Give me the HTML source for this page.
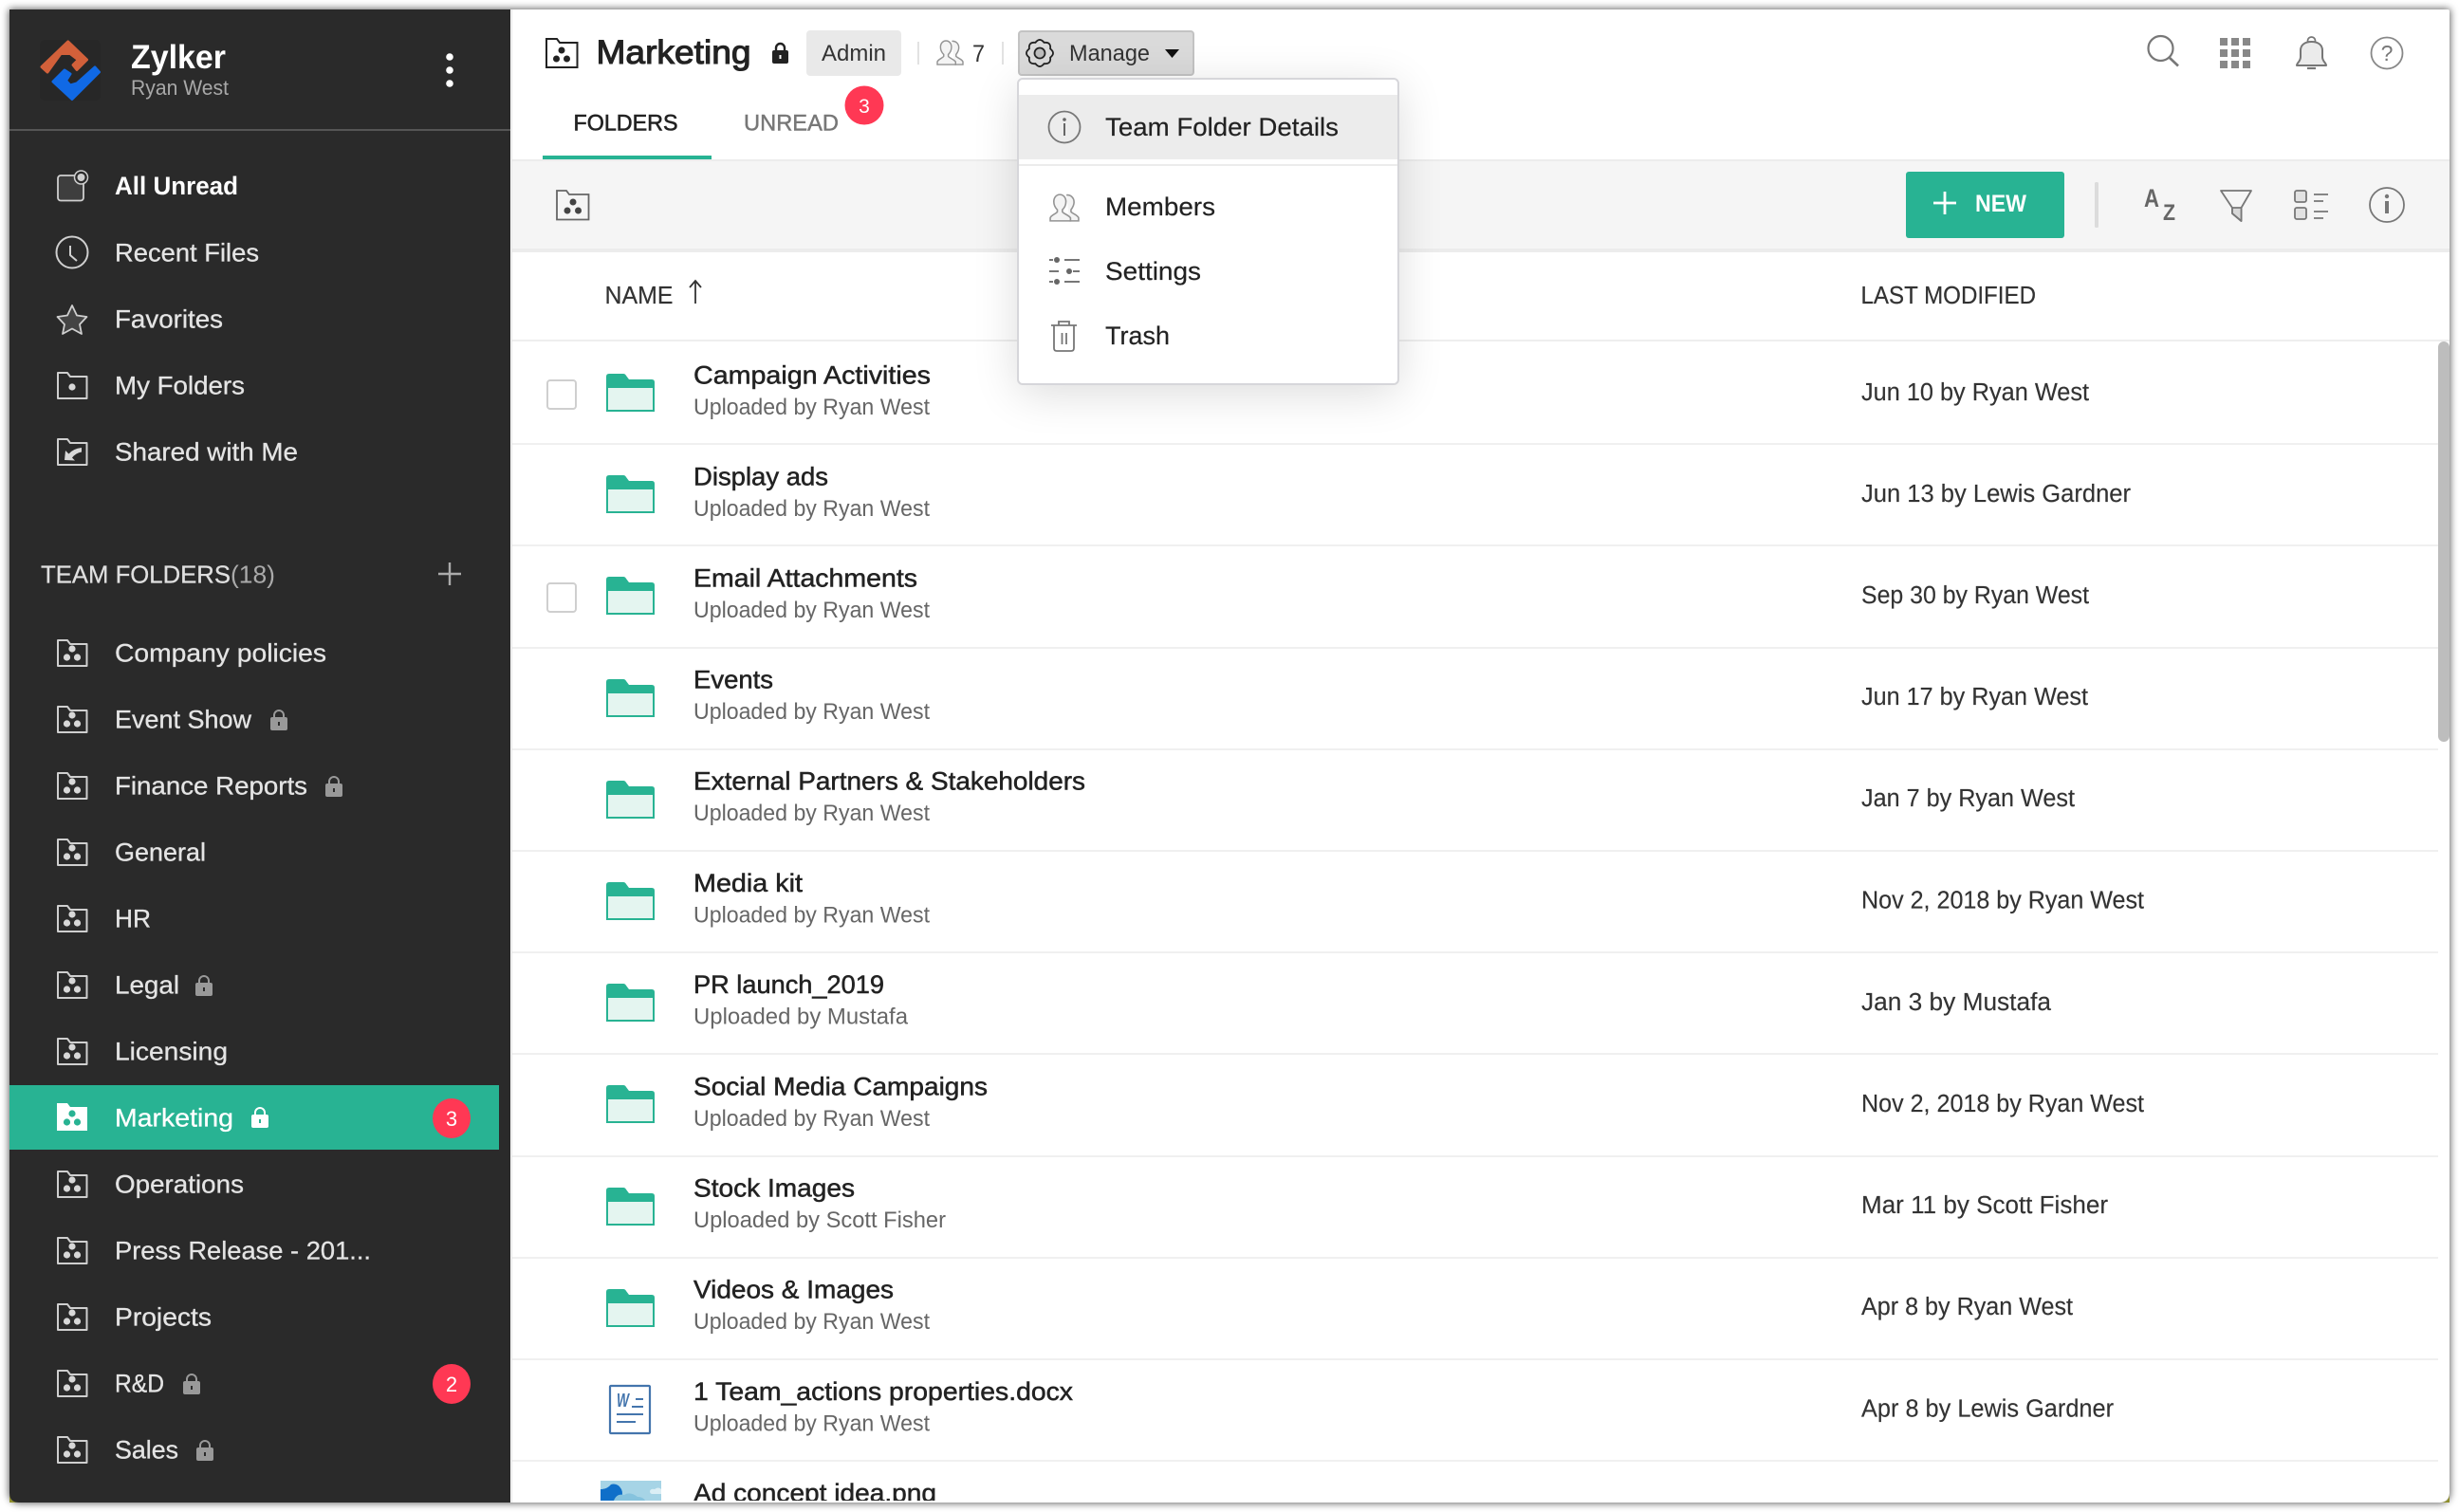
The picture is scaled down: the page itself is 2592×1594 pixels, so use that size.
<!DOCTYPE html>
<html><head><meta charset="utf-8"><title>Marketing</title>
<style>
html,body{margin:0;padding:0;background:#fff;width:2592px;height:1594px;overflow:hidden}
#win{position:absolute;left:10px;top:10px;width:2572px;height:1574px;background:#fff;box-shadow:0 0 8px 1px rgba(0,0,0,.6);border-radius:2px 2px 10px 10px}
svg{position:absolute;left:0;top:0}
text{font-family:"Liberation Sans",sans-serif;}
.m{font-size:26.5px;fill:#e4e4e4;stroke:#e4e4e4;stroke-width:.3}
.t{font-size:26.5px;fill:#222;stroke:#222;stroke-width:.5}
.s{font-size:24px;fill:#666}
.d{font-size:25.5px;fill:#333;stroke:#333;stroke-width:.15}
.dd{font-size:27px;fill:#222;stroke:#222;stroke-width:.2}
.ic{fill:none;stroke:#cfcfcf;stroke-width:2;stroke-linejoin:round}
</style></head><body>
<div id="win"></div>
<svg width="2592" height="1594" viewBox="0 0 2592 1594" xmlns="http://www.w3.org/2000/svg">
<defs>
<clipPath id="cl"><rect x="540" y="360" width="2030" height="1222"/></clipPath>
<filter id="sh" x="-30%" y="-30%" width="160%" height="170%"><feGaussianBlur stdDeviation="24"/></filter>
<symbol id="tf" width="34" height="31" viewBox="-1 -1 34 31" overflow="visible">
<path class="ic" d="M1 1H11L14 5H31.5V28H1Z"/><circle cx="16" cy="10" r="3.6" fill="#d8d8d8"/><circle cx="10.5" cy="19" r="3.6" fill="#d8d8d8"/><circle cx="21.5" cy="19" r="3.6" fill="#d8d8d8"/>
</symbol>
<symbol id="lk" width="18" height="22" viewBox="0 0 18 22" overflow="visible">
<path d="M4 9V6a5 5 0 0 1 10 0V9" fill="none" stroke="currentColor" stroke-width="2"/><rect y="8" width="18" height="14" rx="2" fill="currentColor"/><rect x="8" y="13" width="2" height="4" fill="#2a2a2a"/>
</symbol>
<symbol id="fo" width="51" height="40" viewBox="0 0 51 40">
<path d="M1 14H50V39H1Z" fill="#e4f5f0" stroke="#28b393" stroke-width="2"/>
<path d="M0 13V3Q0 0 3 0H18Q20 0 21 2L24 6H48Q51 6 51 9V13Z" fill="#28b393"/>
</symbol>
<symbol id="mem" viewBox="0 0 30 28" overflow="visible">
<path d="M17 1.500C21 1 24.500 4 24.500 8.500C24.500 11.500 23 14 21.500 16V18C23 20 28 21 29 24V27H20" fill="#f4f4f4" stroke="#949494" stroke-width="1.500"/>
<path d="M1 27V24C2 21 7 20 8 18V16C6 14 4.500 11 4.500 8C4.500 4 7 1 10.500 1S16.500 4 16.500 8C16.500 11 15 14 13 16V18C14 20 19 21 21 24V27Z" fill="#f4f4f4" stroke="#949494" stroke-width="1.500"/>
</symbol>
</defs>

<!-- corner tints -->
<path d="M2572 1584h10v-10q0 10-10 10z" fill="#8f8f2c"/>
<path d="M10 1574v10h10q-10 0-10-10z" fill="#8f8f2c"/>

<!-- sidebar -->
<path d="M10 10H538V1584H20Q10 1584 10 1574Z" fill="#2a2a2a"/>
<rect x="10" y="136" width="528" height="2" fill="#555"/>
<rect x="42" y="42" width="64" height="64" rx="5" fill="#272727"/>
<path d="M71.700 44L91.500 63L81 73.500L77 68.500L82.500 63L74 56.500H64L50 76L44 70.500Z" fill="#d2603a" stroke="#d2603a" stroke-width="3" stroke-linejoin="round"/>
<path d="M100 71L104.500 76L76 104.500L56 86L68 74L74 78L69.500 85L74 90L81 88Z" fill="#1069e5" stroke="#1069e5" stroke-width="3" stroke-linejoin="round"/>
<text x="138" y="72" font-size="35" font-weight="700" fill="#fff" textLength="100" lengthAdjust="spacingAndGlyphs">Zylker</text>
<text x="138" y="100" font-size="22" fill="#a8a8a8" textLength="103" lengthAdjust="spacingAndGlyphs">Ryan West</text>
<circle cx="474" cy="60" r="3.800" fill="#fff"/><circle cx="474" cy="74" r="3.800" fill="#fff"/><circle cx="474" cy="88" r="3.800" fill="#fff"/>

<rect x="61" y="185" width="27" height="26.500" rx="3" fill="#3e3e3e" stroke="#cfcfcf" stroke-width="1.800"/>
<circle cx="85.500" cy="187" r="7" fill="#2a2a2a" stroke="#cfcfcf" stroke-width="1.500"/><circle cx="85.500" cy="187" r="4" fill="#cfcfcf"/>
<text x="121" y="205" font-size="26.500" font-weight="700" fill="#fff" textLength="130" lengthAdjust="spacingAndGlyphs">All Unread</text>

<circle cx="76" cy="266" r="16.500" class="ic"/><path class="ic" d="M74 259V269L81 275"/>
<text class="m" x="121" y="275.500" textLength="152" lengthAdjust="spacingAndGlyphs">Recent Files</text>

<path d="M76 322L81 332.500L91.500 334L84 342L86 352L76 346.500L66 352L68 342L60.500 334L71 332.500Z" fill="#444" stroke="#cfcfcf" stroke-width="1.800" stroke-linejoin="round"/>
<text class="m" x="121" y="345.500" textLength="114" lengthAdjust="spacingAndGlyphs">Favorites</text>

<path class="ic" d="M61 393H71L74 397H91.500V420H61Z"/><circle cx="76" cy="408" r="3.600" fill="#d8d8d8"/>
<text class="m" x="121" y="415.500" textLength="137" lengthAdjust="spacingAndGlyphs">My Folders</text>

<path class="ic" d="M61 463H71L74 467H91.500V490H61Z"/><path d="M68 485L69 475L72.500 478.500Q77 473 86 472V476.500Q80 477.500 76 482.500L79 485.500Z" fill="#d8d8d8"/>
<text class="m" x="121" y="485.500" textLength="193" lengthAdjust="spacingAndGlyphs">Shared with Me</text>

<text x="43" y="614.500" font-size="26" fill="#e0e0e0" stroke="#e0e0e0" stroke-width=".25" textLength="200" lengthAdjust="spacingAndGlyphs">TEAM FOLDERS</text>
<text x="243" y="614.500" font-size="26" fill="#aaa" textLength="47" lengthAdjust="spacingAndGlyphs">(18)</text>
<path d="M474 593V617M462 605H486" stroke="#ababab" stroke-width="2.400"/>

<use href="#tf" x="59" y="673"/><text class="m" x="121" y="697.500" textLength="223" lengthAdjust="spacingAndGlyphs">Company policies</text>
<use href="#tf" x="59" y="743"/><text class="m" x="121" y="767.500" textLength="144" lengthAdjust="spacingAndGlyphs">Event Show</text><use href="#lk" x="285" y="748" color="#999"/>
<use href="#tf" x="59" y="813"/><text class="m" x="121" y="837.500" textLength="203" lengthAdjust="spacingAndGlyphs">Finance Reports</text><use href="#lk" x="343" y="818" color="#999"/>
<use href="#tf" x="59" y="883"/><text class="m" x="121" y="907.500" textLength="96" lengthAdjust="spacingAndGlyphs">General</text>
<use href="#tf" x="59" y="953"/><text class="m" x="121" y="977.500" textLength="38" lengthAdjust="spacingAndGlyphs">HR</text>
<use href="#tf" x="59" y="1023"/><text class="m" x="121" y="1047.500" textLength="68" lengthAdjust="spacingAndGlyphs">Legal</text><use href="#lk" x="206" y="1028" color="#999"/>
<use href="#tf" x="59" y="1093"/><text class="m" x="121" y="1117.500" textLength="119" lengthAdjust="spacingAndGlyphs">Licensing</text>

<rect x="10" y="1144" width="516" height="68" fill="#28b393"/>
<path d="M60 1163H71L74 1167H92V1192H60Z" fill="#fff"/><circle cx="76" cy="1174" r="3.600" fill="#28b393"/><circle cx="70.500" cy="1183" r="3.600" fill="#28b393"/><circle cx="81.500" cy="1183" r="3.600" fill="#28b393"/>
<text x="121" y="1187.500" font-size="26.500" fill="#fff" stroke="#fff" stroke-width=".3" textLength="125" lengthAdjust="spacingAndGlyphs">Marketing</text>
<path d="M269 1176V1173a5 5 0 0 1 10 0V1176" fill="none" stroke="#fff" stroke-width="2"/><rect x="265" y="1175" width="18" height="14" rx="2" fill="#fff"/><rect x="273" y="1180" width="2" height="4" fill="#28b393"/>
<ellipse cx="476" cy="1179" rx="20" ry="21" fill="#ff3854"/><text x="476" y="1187" font-size="22" fill="#fff" text-anchor="middle">3</text>

<use href="#tf" x="59" y="1233"/><text class="m" x="121" y="1257.500" textLength="136" lengthAdjust="spacingAndGlyphs">Operations</text>
<use href="#tf" x="59" y="1303"/><text class="m" x="121" y="1327.500" textLength="270" lengthAdjust="spacingAndGlyphs">Press Release - 201...</text>
<use href="#tf" x="59" y="1373"/><text class="m" x="121" y="1397.500" textLength="102" lengthAdjust="spacingAndGlyphs">Projects</text>
<use href="#tf" x="59" y="1443"/><text class="m" x="121" y="1467.500" textLength="52" lengthAdjust="spacingAndGlyphs">R&amp;D</text><use href="#lk" x="193" y="1448" color="#999"/>
<ellipse cx="476" cy="1459" rx="20" ry="21" fill="#ff3854"/><text x="476" y="1467" font-size="22" fill="#fff" text-anchor="middle">2</text>
<use href="#tf" x="59" y="1513"/><text class="m" x="121" y="1537.500" textLength="67" lengthAdjust="spacingAndGlyphs">Sales</text><use href="#lk" x="207" y="1518" color="#999"/>

<!-- main -->
<rect x="539" y="10" width="1" height="1574" fill="#e4e4e4"/>
<!-- header -->
<path d="M576 41H587L590 45H608.500V71H576Z" fill="none" stroke="#222" stroke-width="2"/><circle cx="592" cy="53" r="3.500" fill="#222"/><circle cx="586.500" cy="62" r="3.500" fill="#222"/><circle cx="597.500" cy="62" r="3.500" fill="#222"/>
<text x="628.500" y="67" font-size="35" fill="#222" stroke="#222" stroke-width="1.100" textLength="163" lengthAdjust="spacingAndGlyphs">Marketing</text>
<path d="M818 54V50.500a4.500 4.500 0 0 1 9 0V54" fill="none" stroke="#222" stroke-width="2.400"/><rect x="814" y="53" width="17" height="14" rx="2" fill="#222"/><rect x="821.500" y="58" width="2" height="4" fill="#fff"/>
<rect x="850" y="32" width="100" height="48" rx="4" fill="#e9e9e9"/>
<text x="866" y="64" font-size="24" fill="#333" textLength="68" lengthAdjust="spacingAndGlyphs">Admin</text>
<rect x="967" y="44" width="2" height="24" fill="#e2e2e2"/>
<use href="#mem" x="987" y="42" width="29" height="27"/>
<text x="1025" y="65" font-size="25" fill="#333" textLength="13" lengthAdjust="spacingAndGlyphs">7</text>
<rect x="1056" y="44" width="2" height="24" fill="#e2e2e2"/>
<rect x="1074" y="33" width="184" height="46" rx="3" fill="#dadada" stroke="#c3c3c3" stroke-width="2"/>
<g transform="translate(1096 56)"><path d="M11.090 -4.590Q17 0 11.090 4.590Q12 12 4.590 11.090Q0 17 -4.590 11.090Q-12 12 -11.090 4.590Q-17 0 -11.090 -4.590Q-12 -12 -4.590 -11.090Q0 -17 4.590 -11.090Q12 -12 11.090 -4.590Z" fill="none" stroke="#222" stroke-width="1.800"/><circle r="5.500" fill="#bdbdbd" stroke="#222" stroke-width="1.800"/></g>
<text x="1127" y="64" font-size="24" fill="#333" textLength="85" lengthAdjust="spacingAndGlyphs">Manage</text>
<path d="M1228 52H1243L1235.500 61Z" fill="#111"/>

<text x="604.500" y="137.500" font-size="24.500" fill="#222" stroke="#222" stroke-width=".6" textLength="110" lengthAdjust="spacingAndGlyphs">FOLDERS</text>
<rect x="572" y="164" width="178" height="4" fill="#28b393"/>
<text x="784" y="137.500" font-size="24.500" fill="#777" stroke="#777" stroke-width=".45" textLength="100" lengthAdjust="spacingAndGlyphs">UNREAD</text>
<circle cx="911" cy="111" r="20.500" fill="#ff3854"/><text x="911" y="119" font-size="21" fill="#fff" text-anchor="middle">3</text>

<!-- top right icons -->
<circle cx="2277.500" cy="51" r="13" fill="none" stroke="#777" stroke-width="2.200"/><path d="M2287 61L2296 69.500" stroke="#777" stroke-width="2.600"/>
<g fill="#888"><rect x="2340" y="40" width="8" height="8"/><rect x="2352" y="40" width="8" height="8"/><rect x="2364" y="40" width="8" height="8"/><rect x="2340" y="52" width="8" height="8"/><rect x="2352" y="52" width="8" height="8"/><rect x="2364" y="52" width="8" height="8"/><rect x="2340" y="64" width="8" height="8"/><rect x="2352" y="64" width="8" height="8"/><rect x="2364" y="64" width="8" height="8"/></g>
<circle cx="2436.500" cy="43" r="4" fill="none" stroke="#777" stroke-width="1.800"/>
<path d="M2421 69C2421 66 2425 65 2425 60V53C2425 47 2430 44 2436.500 44S2448 47 2448 53V60C2448 65 2452 66 2452 69Z" fill="#ebebeb" stroke="#777" stroke-width="2" stroke-linejoin="round"/><path d="M2432 72H2441" stroke="#777" stroke-width="2.200"/>
<circle cx="2516" cy="56" r="16.500" fill="none" stroke="#888" stroke-width="1.800"/>
<text x="2516" y="64" font-size="23" fill="#777" text-anchor="middle">?</text>

<!-- toolbar -->
<rect x="540" y="168" width="2042" height="2" fill="#ececec"/>
<rect x="540" y="170" width="2042" height="92" fill="#f5f5f5"/>
<rect x="540" y="262" width="2042" height="4" fill="#ececec"/>
<path d="M587 201H597L600 205H620.500V231.500H587Z" fill="none" stroke="#666" stroke-width="1.800"/><circle cx="604" cy="213" r="3.500" fill="#444"/><circle cx="598" cy="222" r="3.500" fill="#444"/><circle cx="609.500" cy="222" r="3.500" fill="#444"/>
<rect x="2009" y="181" width="167" height="70" rx="3" fill="#28b393"/>
<path d="M2050 202V226M2038 214H2062" stroke="#fff" stroke-width="2.800"/>
<text x="2082" y="223" font-size="25" font-weight="700" fill="#fff" textLength="54" lengthAdjust="spacingAndGlyphs">NEW</text>
<rect x="2208" y="192" width="4" height="48" rx="1.500" fill="#dcdcdc"/>
<text x="2260" y="218" font-size="27" font-weight="700" fill="#666" textLength="16" lengthAdjust="spacingAndGlyphs">A</text>
<text x="2280" y="232" font-size="24" font-weight="700" fill="#666" textLength="13" lengthAdjust="spacingAndGlyphs">Z</text>
<path d="M2341 201H2373L2362.500 219V233L2353 225V219Z" fill="#f5f5f5" stroke="#777" stroke-width="1.800" stroke-linejoin="round"/><path d="M2353 219H2362.500V233L2353 225Z" fill="#d8d8d8" stroke="#777" stroke-width="1.800" stroke-linejoin="round"/>
<rect x="2419" y="201" width="12" height="12" rx="2" fill="#e2e2e2" stroke="#777" stroke-width="1.800"/><rect x="2419" y="219" width="12" height="12" rx="2" fill="#e2e2e2" stroke="#777" stroke-width="1.800"/>
<path d="M2439 205H2454M2439 212H2449M2439 223H2454M2439 230H2449" stroke="#777" stroke-width="1.800"/>
<circle cx="2516" cy="216" r="18" fill="none" stroke="#777" stroke-width="1.800"/><circle cx="2516" cy="207" r="2.200" fill="#777"/><rect x="2514" y="212" width="4" height="13" fill="#777"/>

<!-- table head -->
<text x="637.500" y="320" font-size="25.500" fill="#333" stroke="#333" stroke-width=".2" textLength="72" lengthAdjust="spacingAndGlyphs">NAME</text>
<path d="M733 320V296M727 303L733 296L739 303" fill="none" stroke="#333" stroke-width="1.800"/>
<text x="1961.500" y="320" font-size="25.500" fill="#333" stroke="#333" stroke-width=".2" textLength="184.500" lengthAdjust="spacingAndGlyphs">LAST MODIFIED</text>
<rect x="540" y="358" width="2042" height="2" fill="#eee"/>

<!-- dividers -->
<g fill="#f0f0f0">
<rect x="540" y="467" width="2030" height="2"/><rect x="540" y="574" width="2030" height="2"/><rect x="540" y="682" width="2030" height="2"/><rect x="540" y="789" width="2030" height="2"/><rect x="540" y="896" width="2030" height="2"/><rect x="540" y="1003" width="2030" height="2"/><rect x="540" y="1110" width="2030" height="2"/><rect x="540" y="1218" width="2030" height="2"/><rect x="540" y="1325" width="2030" height="2"/><rect x="540" y="1432" width="2030" height="2"/><rect x="540" y="1539" width="2030" height="2"/>
</g>

<rect x="577" y="401" width="30" height="30" rx="3" fill="#fff" stroke="#cfcfcf" stroke-width="2"/>
<rect x="577" y="615" width="30" height="30" rx="3" fill="#fff" stroke="#cfcfcf" stroke-width="2"/>

<use href="#fo" x="639" y="394"/>
<text class="t" x="731" y="404.500" textLength="250" lengthAdjust="spacingAndGlyphs">Campaign Activities</text>
<text class="s" x="731" y="437" textLength="249" lengthAdjust="spacingAndGlyphs">Uploaded by Ryan West</text>
<text class="d" x="1962" y="422" textLength="240" lengthAdjust="spacingAndGlyphs">Jun 10 by Ryan West</text>

<use href="#fo" x="639" y="501"/>
<text class="t" x="731" y="511.700" textLength="142" lengthAdjust="spacingAndGlyphs">Display ads</text>
<text class="s" x="731" y="544" textLength="249" lengthAdjust="spacingAndGlyphs">Uploaded by Ryan West</text>
<text class="d" x="1962" y="529" textLength="284" lengthAdjust="spacingAndGlyphs">Jun 13 by Lewis Gardner</text>

<use href="#fo" x="639" y="608"/>
<text class="t" x="731" y="618.500" textLength="236" lengthAdjust="spacingAndGlyphs">Email Attachments</text>
<text class="s" x="731" y="651" textLength="249" lengthAdjust="spacingAndGlyphs">Uploaded by Ryan West</text>
<text class="d" x="1962" y="636" textLength="240" lengthAdjust="spacingAndGlyphs">Sep 30 by Ryan West</text>

<use href="#fo" x="639" y="716"/>
<text class="t" x="731" y="725.500" textLength="84" lengthAdjust="spacingAndGlyphs">Events</text>
<text class="s" x="731" y="758" textLength="249" lengthAdjust="spacingAndGlyphs">Uploaded by Ryan West</text>
<text class="d" x="1962" y="743" textLength="239" lengthAdjust="spacingAndGlyphs">Jun 17 by Ryan West</text>

<use href="#fo" x="639" y="823"/>
<text class="t" x="731" y="832.500" textLength="413" lengthAdjust="spacingAndGlyphs">External Partners &amp; Stakeholders</text>
<text class="s" x="731" y="865" textLength="249" lengthAdjust="spacingAndGlyphs">Uploaded by Ryan West</text>
<text class="d" x="1962" y="850" textLength="225" lengthAdjust="spacingAndGlyphs">Jan 7 by Ryan West</text>

<use href="#fo" x="639" y="930"/>
<text class="t" x="731" y="940" textLength="115" lengthAdjust="spacingAndGlyphs">Media kit</text>
<text class="s" x="731" y="972.500" textLength="249" lengthAdjust="spacingAndGlyphs">Uploaded by Ryan West</text>
<text class="d" x="1962" y="957.500" textLength="298" lengthAdjust="spacingAndGlyphs">Nov 2, 2018 by Ryan West</text>

<use href="#fo" x="639" y="1037"/>
<text class="t" x="731" y="1047.200" textLength="201" lengthAdjust="spacingAndGlyphs">PR launch_2019</text>
<text class="s" x="731" y="1079.700" textLength="226" lengthAdjust="spacingAndGlyphs">Uploaded by Mustafa</text>
<text class="d" x="1962" y="1065" textLength="200" lengthAdjust="spacingAndGlyphs">Jan 3 by Mustafa</text>

<use href="#fo" x="639" y="1144"/>
<text class="t" x="731" y="1154.400" textLength="310" lengthAdjust="spacingAndGlyphs">Social Media Campaigns</text>
<text class="s" x="731" y="1187" textLength="249" lengthAdjust="spacingAndGlyphs">Uploaded by Ryan West</text>
<text class="d" x="1962" y="1172" textLength="298" lengthAdjust="spacingAndGlyphs">Nov 2, 2018 by Ryan West</text>

<use href="#fo" x="639" y="1252"/>
<text class="t" x="731" y="1261.500" textLength="170" lengthAdjust="spacingAndGlyphs">Stock Images</text>
<text class="s" x="731" y="1294" textLength="266" lengthAdjust="spacingAndGlyphs">Uploaded by Scott Fisher</text>
<text class="d" x="1962" y="1279" textLength="260" lengthAdjust="spacingAndGlyphs">Mar 11 by Scott Fisher</text>

<use href="#fo" x="639" y="1359"/>
<text class="t" x="731" y="1368.700" textLength="211" lengthAdjust="spacingAndGlyphs">Videos &amp; Images</text>
<text class="s" x="731" y="1401.200" textLength="249" lengthAdjust="spacingAndGlyphs">Uploaded by Ryan West</text>
<text class="d" x="1962" y="1386" textLength="223" lengthAdjust="spacingAndGlyphs">Apr 8 by Ryan West</text>

<rect x="643" y="1461" width="42" height="50" rx="1" fill="#fff" stroke="#4475ad" stroke-width="2.200"/>
<text x="650" y="1483" font-size="20" font-weight="700" font-style="italic" fill="#4475ad" textLength="13" lengthAdjust="spacingAndGlyphs">W</text>
<path d="M670 1475H678M666 1483H678M650 1491H678M650 1499H670" stroke="#4475ad" stroke-width="2"/>
<text class="t" x="731" y="1476" textLength="400" lengthAdjust="spacingAndGlyphs">1 Team_actions properties.docx</text>
<text class="s" x="731" y="1508.500" textLength="249" lengthAdjust="spacingAndGlyphs">Uploaded by Ryan West</text>
<text class="d" x="1962" y="1493.500" textLength="266" lengthAdjust="spacingAndGlyphs">Apr 8 by Lewis Gardner</text>

<g clip-path="url(#cl)">
<rect x="633" y="1561" width="64" height="21" fill="#a6d4e6"/>
<path d="M633 1582V1570Q640 1570 644 1565Q651 1563 655 1570Q657 1574 655 1582Z" fill="#0f6fc9"/>
<path d="M647 1582Q650 1574 658 1576Q664 1572 672 1578Q678 1578 680 1582Z" fill="#86c3de"/>
<path d="M685 1572Q686 1569 690 1570Q694 1567 697 1570V1575H688Q685 1575 685 1572Z" fill="#dbeef5"/>
<text class="t" x="731" y="1583.200" textLength="256" lengthAdjust="spacingAndGlyphs">Ad concept idea.png</text>
</g>

<!-- scrollbar -->
<rect x="2570" y="360" width="12" height="422" rx="6" fill="#bdbdbd"/>

<!-- dropdown -->
<rect x="1073" y="92" width="401" height="322" fill="#000" opacity=".14" filter="url(#sh)"/>
<rect x="1073" y="83" width="401" height="322" rx="5" fill="#fff" stroke="#d6d6da" stroke-width="2"/>
<rect x="1074" y="100" width="399" height="68" fill="#ececec"/>
<rect x="1074" y="173" width="399" height="2" fill="#ececec"/>
<circle cx="1122" cy="134" r="16.500" fill="none" stroke="#777" stroke-width="1.800"/><circle cx="1122" cy="126" r="1.800" fill="#666"/><rect x="1121" y="130" width="2" height="13" fill="#666"/>
<text class="dd" x="1165" y="143" textLength="246" lengthAdjust="spacingAndGlyphs">Team Folder Details</text>
<use href="#mem" x="1106" y="204" width="32" height="30"/>
<text class="dd" x="1165" y="227" textLength="116" lengthAdjust="spacingAndGlyphs">Members</text>
<g stroke="#777" stroke-width="2"><path d="M1106 274H1110M1122 274H1138M1106 286H1116M1131 286H1138M1106 297H1110M1122 297H1138" fill="none"/></g>
<circle cx="1114" cy="274" r="3" fill="#666"/><circle cx="1127" cy="286" r="3" fill="#666"/><circle cx="1114" cy="297" r="3" fill="#666"/>
<text class="dd" x="1165" y="295" textLength="101" lengthAdjust="spacingAndGlyphs">Settings</text>
<path d="M1108 343H1135M1116 343V339H1127V343M1111 343V367Q1111 370 1114 370H1129Q1132 370 1132 367V343M1119.500 351V363M1124 351V363" fill="none" stroke="#777" stroke-width="1.800"/>
<text class="dd" x="1165" y="363" textLength="68" lengthAdjust="spacingAndGlyphs">Trash</text>
</svg>
</body></html>
